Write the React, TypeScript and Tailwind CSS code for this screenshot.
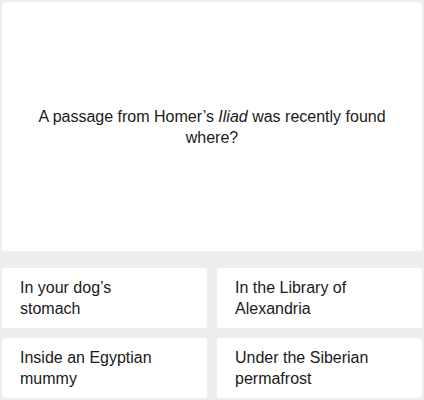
const answers = [
  'In your dog’s stomach',
  'In the Library of Alexandria',
  'Inside an Egyptian mummy',
  'Under the Siberian permafrost',
]

export default function App() {
  return (
    <div className="w-[424px] h-[400px] bg-[#eeeeee] p-[2px] flex flex-col font-['Liberation_Sans',Arial,sans-serif] text-[#1a1a1a]">
      <div className="h-[249px] bg-white rounded-[3px] flex items-center justify-center px-8">
        <p className="text-[16px] leading-[21px] text-center">
          A passage from Homer’s <i>Iliad</i> was recently found where?
        </p>
      </div>
      <div className="mt-[17px] grid grid-cols-2 gap-[10px]">
        {answers.map(a => (
          <div
            key={a}
            className="h-[60px] bg-white rounded-[3px] flex items-center pl-[18px] pr-[40px]"
          >
            <span className="text-[16px] leading-[21px]">{a}</span>
          </div>
        ))}
      </div>
    </div>
  )
}
